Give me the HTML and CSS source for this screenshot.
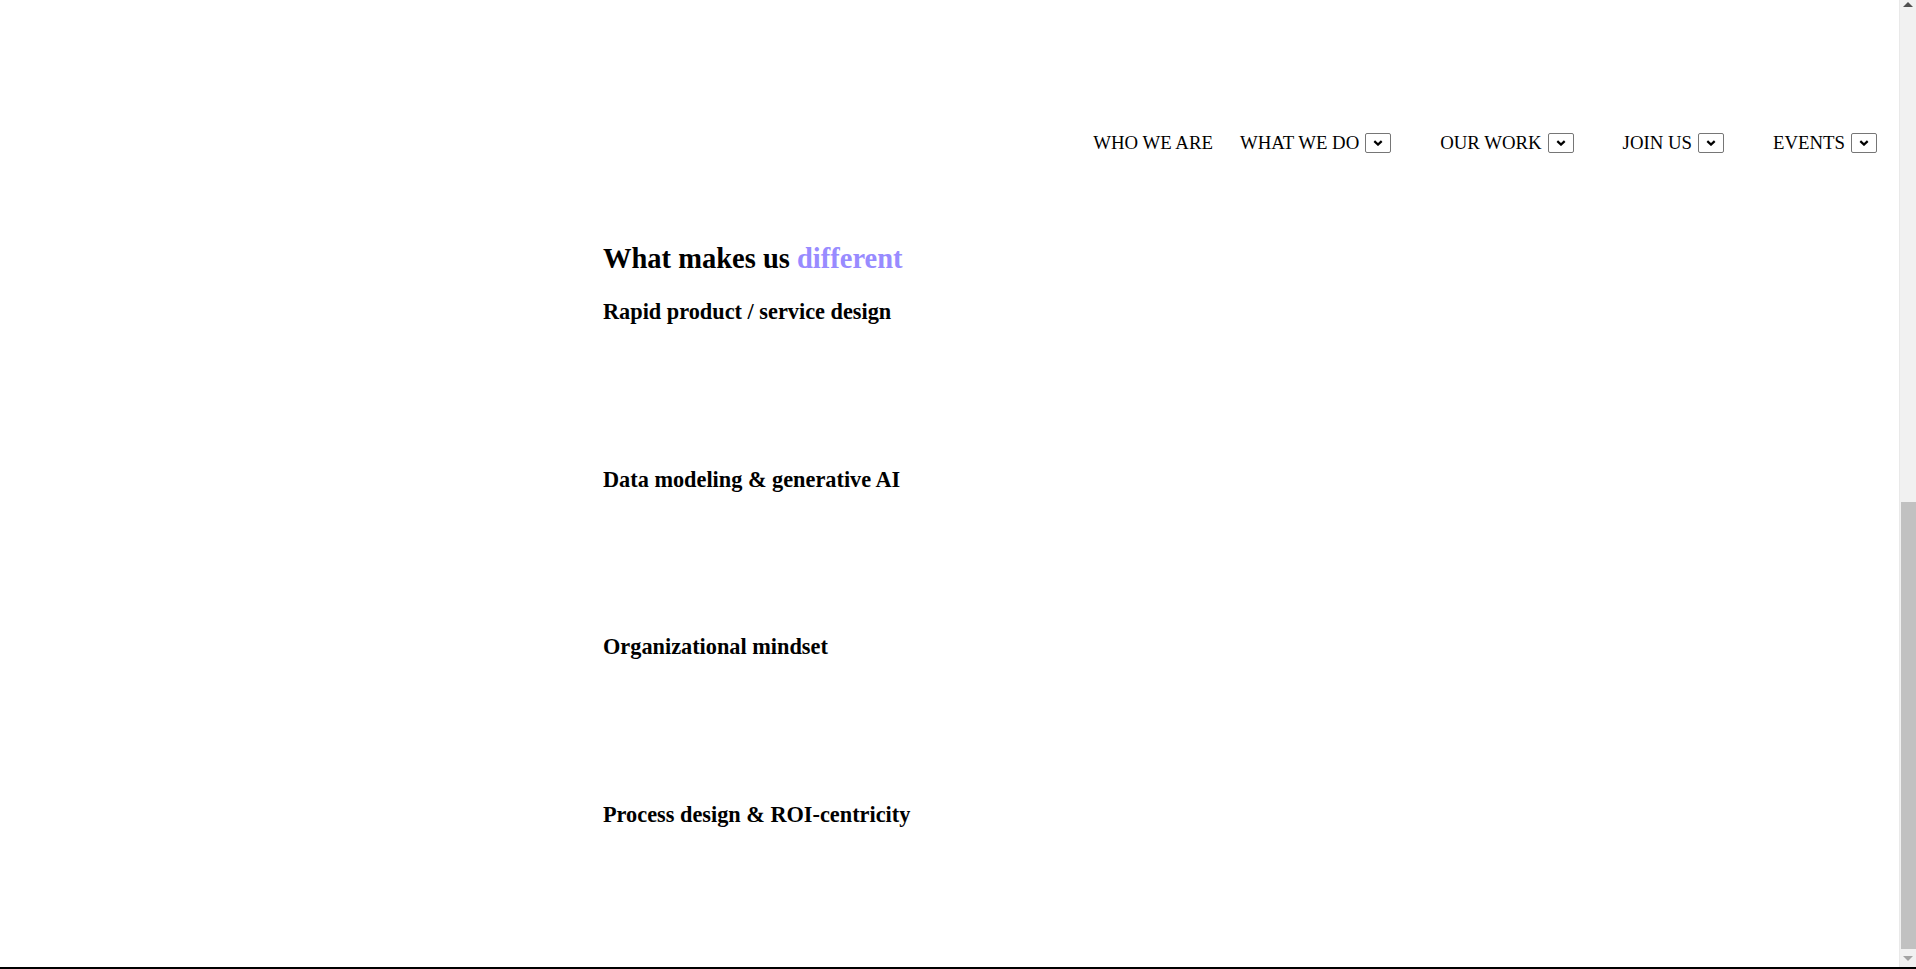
FILE: index.html
```html
<!DOCTYPE html>
<html lang="en">
<head>
<meta charset="utf-8">
<title>What makes us different</title>
<link rel="stylesheet" href="styles.css">
</head>
<body>
<div class="screen">
  <div class="window">
    <div class="page">
      <header class="topbar">
        <nav class="nav">
          <div class="nav-item"><span class="nav-label">WHO WE ARE</span></div>
          <div class="nav-item has-menu">
            <span class="nav-label">WHAT WE DO</span>
            <button class="drop" type="button" aria-label="Open menu"><svg viewBox="0 0 10 6" width="10" height="6"><path d="M1.3 1.1 L5 4.6 L8.7 1.1" fill="none" stroke="#000" stroke-width="2.2"/></svg></button>
            <span class="spacer"></span>
          </div>
          <div class="nav-item has-menu">
            <span class="nav-label">OUR WORK</span>
            <button class="drop" type="button" aria-label="Open menu"><svg viewBox="0 0 10 6" width="10" height="6"><path d="M1.3 1.1 L5 4.6 L8.7 1.1" fill="none" stroke="#000" stroke-width="2.2"/></svg></button>
            <span class="spacer"></span>
          </div>
          <div class="nav-item has-menu">
            <span class="nav-label">JOIN US</span>
            <button class="drop" type="button" aria-label="Open menu"><svg viewBox="0 0 10 6" width="10" height="6"><path d="M1.3 1.1 L5 4.6 L8.7 1.1" fill="none" stroke="#000" stroke-width="2.2"/></svg></button>
            <span class="spacer"></span>
          </div>
          <div class="nav-item has-menu">
            <span class="nav-label">EVENTS</span>
            <button class="drop" type="button" aria-label="Open menu"><svg viewBox="0 0 10 6" width="10" height="6"><path d="M1.3 1.1 L5 4.6 L8.7 1.1" fill="none" stroke="#000" stroke-width="2.2"/></svg></button>
            <span class="spacer"></span>
          </div>
        </nav>
      </header>
      <main class="content">
        <h2 class="title">What makes us <span class="accent">different</span></h2>
        <section class="feature"><h3 class="feature-title">Rapid product / service design</h3></section>
        <section class="feature"><h3 class="feature-title">Data modeling &amp; generative AI</h3></section>
        <section class="feature"><h3 class="feature-title">Organizational mindset</h3></section>
        <section class="feature"><h3 class="feature-title">Process design &amp; ROI-centricity</h3></section>
      </main>
    </div>
    <div class="scrollbar">
      <div class="arrow up"></div>
      <div class="track">
        <div class="thumb"></div>
      </div>
      <div class="arrow down"></div>
    </div>
  </div>
  <div class="bottom-line"></div>
</div>
</body>
</html>
```

FILE: styles.css
```css
html, body {
  margin: 0;
  padding: 0;
  height: 100%;
  overflow: hidden;
  background: #fff;
}

body {
  font-family: "Liberation Serif", "Times New Roman", serif;
  color: #000;
  font-size: 18.8px;
}

.screen {
  height: 969px;
  display: flex;
  flex-direction: column;
}

.window {
  flex: 1;
  display: flex;
  min-height: 0;
}

.page {
  flex: 1;
  display: flex;
  flex-direction: column;
  min-width: 0;
}

.topbar {
  padding-top: 132px;
  display: flex;
  justify-content: flex-end;
}

.nav {
  display: flex;
  align-items: center;
  gap: 27px;
}

.nav-item {
  display: flex;
  align-items: center;
  height: 22px;
}

.nav-label {
  font-size: 18.8px;
  line-height: 22px;
  white-space: nowrap;
}

.drop {
  margin: 0 0 0 6px;
  padding: 0;
  width: 26px;
  height: 20px;
  border: 1px solid #767676;
  border-radius: 2px;
  background: #fff;
  display: flex;
  align-items: center;
  justify-content: center;
}

.drop svg {
  display: block;
}

.spacer {
  width: 22px;
}

.content {
  width: 693px;
  margin: 0 auto;
  padding-top: 89px;
}

.title {
  margin: 0 0 24px;
  font-size: 28.5px;
  line-height: 32px;
  font-weight: bold;
}

.accent {
  color: #988bff;
}

.feature {
  height: 167.67px;
}

.feature-title {
  margin: 0;
  font-size: 22.3px;
  line-height: 26px;
  font-weight: bold;
}

.scrollbar {
  width: 17px;
  background: #f1f1f1;
  display: flex;
  flex-direction: column;
  border-left: 1px solid #e9e9e9;
  box-sizing: border-box;
}

.arrow {
  height: 17px;
  display: flex;
  justify-content: center;
}

.arrow.up {
  align-items: flex-start;
  padding-top: 2px;
  box-sizing: border-box;
}

.arrow.up::before {
  content: "";
  border-left: 5px solid transparent;
  border-right: 5px solid transparent;
  border-bottom: 5px solid #505050;
}

.arrow.down {
  align-items: flex-end;
  padding-bottom: 6px;
  box-sizing: border-box;
}

.arrow.down::before {
  content: "";
  border-left: 5px solid transparent;
  border-right: 5px solid transparent;
  border-top: 5px solid #a3a3a3;
}

.track {
  flex: 1;
  padding-top: 485px;
  padding-bottom: 1px;
  display: flex;
  flex-direction: column;
}

.thumb {
  flex: 1;
  margin-left: 1px;
  background: #c1c1c1;
}

.bottom-line {
  height: 2px;
  background: #000;
}
```
